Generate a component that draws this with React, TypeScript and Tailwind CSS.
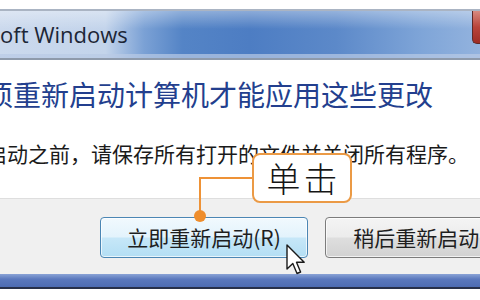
import React from "react";

export default function App() {
  return (
    <div className="relative w-[480px] h-[300px] overflow-hidden bg-white flex flex-col font-['Noto_Sans_CJK_SC','Noto_Sans',sans-serif]">
      <div className="h-[9px] shrink-0 bg-white" />
      {/* Title bar */}
      <div className="relative h-[51px] shrink-0 flex items-start border-t-2 border-t-[#aab4c3] border-b-2 border-b-[#8e9aab] bg-[linear-gradient(to_right,#cbd9ed_0%,#c3d4eb_22%,#7ba1d5_30%,#5484c6_38%,#4d7dc3_52%,#5c89c9_70%,#7fa5d8_88%,#93b3de_100%)]">
        <div className="absolute inset-x-0 top-0 h-[18px] bg-[linear-gradient(to_bottom,rgba(255,255,255,0.35),rgba(255,255,255,0))]" />
        <div className="absolute inset-x-0 bottom-0 h-[4px] bg-[#b9cbe5] opacity-70" />
        <span className="relative self-center mt-[-2px] whitespace-nowrap font-['Open_Sans',sans-serif] text-[22px] leading-none text-[#1c2636]">
          oft Windows
        </span>
        <div className="relative ml-auto w-[8px] h-[33px] rounded-bl-[5px] border-l border-b border-[#5e2a28] bg-[linear-gradient(to_bottom,#d88a80,#b9443a_50%,#9e2d25)]" />
      </div>
      {/* Content */}
      <div className="h-[138px] shrink-0 bg-white flex flex-col">
        <p className="ml-[-15px] mt-[20px] whitespace-nowrap text-[28px] leading-none text-[#233f8e]">
          须重新启动计算机才能应用这些更改
        </p>
        <p className="ml-[-14px] mt-[35px] whitespace-nowrap text-[21px] leading-none text-[#1a1a1a]">
          启动之前，请保存所有打开的文件并关闭所有程序。
        </p>
      </div>
      {/* Button area */}
      <div className="h-[76px] shrink-0 bg-[#f0f0f0] border-t border-[#dedede] flex items-start pl-[100px] pt-[18px] gap-[17px]">
        <div className="w-[208px] h-[41px] shrink-0 rounded-[4px] border border-[#4b86b4] bg-[linear-gradient(to_bottom,#f1f9fe_0%,#e3f3fc_48%,#c6e7f8_52%,#b3def4_100%)] shadow-[inset_0_0_0_1px_rgba(255,255,255,0.7)] flex items-center justify-center">
          <span className="whitespace-nowrap text-[21px] leading-none text-[#1e1e1e]">立即重新启动(R)</span>
        </div>
        <div className="w-[208px] h-[41px] shrink-0 rounded-[4px] border border-[#7c7c7c] bg-[linear-gradient(to_bottom,#f4f4f4_0%,#ececec_48%,#dedede_52%,#d2d2d2_100%)] shadow-[inset_0_0_0_1px_rgba(255,255,255,0.7)] flex items-center justify-center">
          <span className="whitespace-nowrap text-[21px] leading-none text-[#1e1e1e]">稍后重新启动(L)</span>
        </div>
      </div>
      <div className="h-[13px] shrink-0 bg-[linear-gradient(to_bottom,#8aa3d6,#5a78bd_40%,#4d6cb3)]" />
      <div className="h-[2px] shrink-0 bg-[#27304a]" />
      <div className="flex-1 bg-white" />

      {/* Callout connector */}
      <div className="absolute left-[199px] top-[177px] w-[54px] h-[2px] bg-[#ee9236]" />
      <div className="absolute left-[199px] top-[177px] w-[2px] h-[38px] bg-[#ee9236]" />
      <div className="absolute left-[194px] top-[210px] w-[12px] h-[12px] rounded-full bg-[#ef8d2c]" />
      {/* Callout */}
      <div className="absolute left-[252px] top-[153px] w-[100px] h-[50px] rounded-[8px] border-2 border-[#eb9a45] bg-white flex items-center justify-center">
        <span className="whitespace-nowrap text-[34px] font-light leading-none tracking-[3px] text-[#151515] pl-[3px]">单击</span>
      </div>
      {/* Cursor */}
      <svg className="absolute left-[286px] top-[244px]" width="20" height="32" viewBox="0 0 20 32">
        <path
          d="M1 1 L1 25 L6.8 19.6 L11 29.5 L14.6 28 L10.5 18.3 L18.2 18.3 Z"
          fill="#ffffff"
          stroke="#1a1a1a"
          strokeWidth="1.4"
          strokeLinejoin="round"
        />
      </svg>
    </div>
  );
}
